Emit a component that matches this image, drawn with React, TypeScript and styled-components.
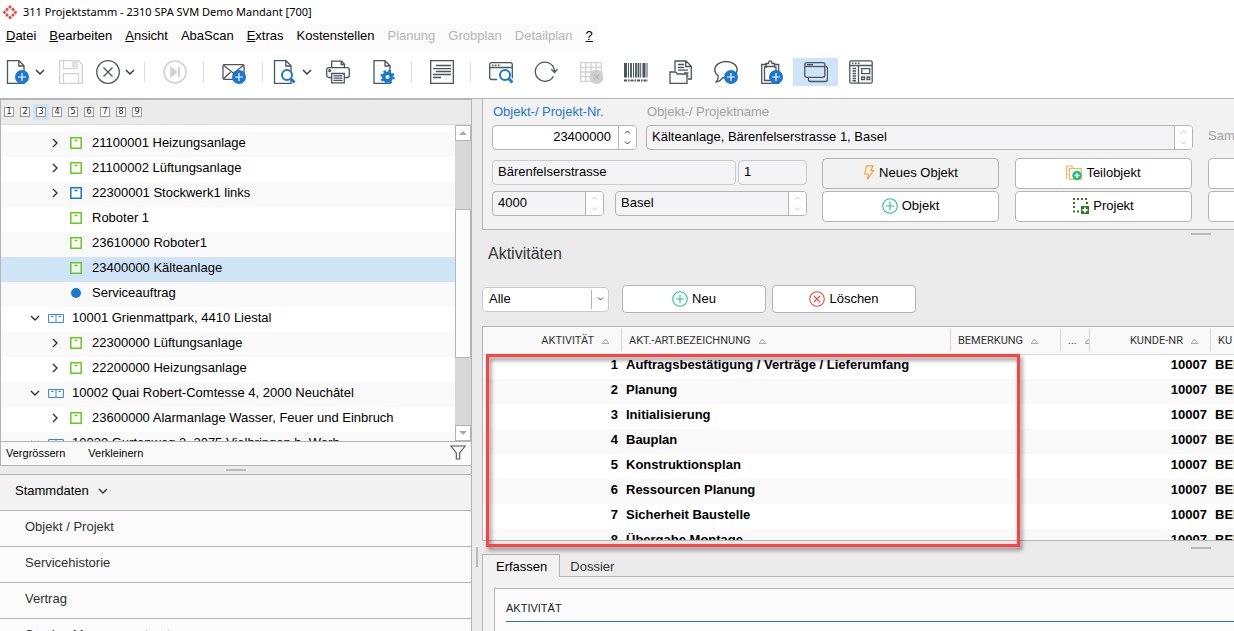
import React from "react";
import styled, { createGlobalStyle, css } from "styled-components";

const SANS = `"Liberation Sans", Arial, sans-serif`;
const INK = "#4a5560";
const BLUE = "#1a78d2";
const MUTED = "#d2d2d2";
const LINE = "#b4b4b4";

const GlobalStyle = createGlobalStyle`
  * { box-sizing: border-box; }
  body { margin: 0; background: #fff; color: #000; font: 13px/16px ${SANS}; }
  button, input, select { font: inherit; color: inherit; }
  button { margin: 0; padding: 0; border: 0; background: none; }
  ul { list-style: none; margin: 0; padding: 0; }
  svg { display: block; flex: none; }
`;

/* ---------- frame ---------- */

const Window = styled.div`
  display: flex;
  flex-direction: column;
  height: 100vh;
  overflow: hidden;
`;

const TitleBar = styled.header`
  display: flex;
  align-items: center;
  gap: 5px;
  height: 24px;
  padding-left: 2px;
  font: 11px/16px "Noto Sans", "Open Sans", sans-serif;
`;

const MenuBar = styled.nav`
  display: flex;
  align-items: center;
  align-self: flex-start;
  gap: 13px;
  height: 25px;
  padding: 0 6px 1px;
  background: #fbfbfb;
`;

const MenuItem = styled.button`
  color: ${(p) => (p.disabled ? "#b5b5b5" : "#000")};
`;

const ToolBar = styled.div`
  display: flex;
  align-items: center;
  height: 49px;
  padding: 0 0 3px 3px;
`;

const ToolButton = styled.button<{ $active?: boolean }>`
  display: flex;
  align-items: center;
  justify-content: center;
  gap: 4px;
  width: 45px;
  height: 28px;
  background: ${(p) => (p.$active ? "#d0e4f8" : "transparent")};
`;

const Separator = styled.span`
  width: 1px;
  height: 20px;
  margin: 0 7px 0 6px;
  background: #dcdcdc;
`;

const Body = styled.div`
  display: flex;
  flex: 1;
  min-height: 0;
  border-top: 1px solid ${LINE};
  background: #ebebeb;
`;

const Sidebar = styled.aside`
  display: flex;
  flex-direction: column;
  flex: none;
  width: 472px;
  border-right: 1px solid ${LINE};
`;

const VerticalSplitter = styled.div`
  flex: none;
  width: 10px;
  padding: 448px 0 0 4px;
`;

const VerticalGrip = styled.div`
  width: 2px;
  height: 20px;
  background: #bababa;
`;

const Splitter = styled.div<{ $height: number; $start?: number }>`
  display: flex;
  flex: none;
  align-items: center;
  justify-content: ${(p) => (p.$start ? "flex-start" : "center")};
  padding-left: ${(p) => p.$start ?? 0}px;
  height: ${(p) => p.$height}px;
`;

const Grip = styled.div`
  flex: none;
  width: 20px;
  height: 2px;
  background: #bababa;
`;

/* ---------- project tree ---------- */

const TreePanel = styled.section`
  display: flex;
  flex: none;
  flex-direction: column;
  height: 367px;
  border: solid ${LINE};
  border-width: 1px 0 1px 1px;
`;

const LevelBar = styled.div`
  display: flex;
  align-items: center;
  flex: none;
  height: 25px;
  border-bottom: 1px solid #dadada;
`;

const Level = styled.button<{ $active?: boolean }>`
  display: flex;
  align-items: center;
  justify-content: center;
  width: 16px;
  height: 16px;
  background: ${(p) => (p.$active ? "#d0e4f8" : "transparent")};
  span {
    width: 10px;
    height: 10px;
    border: 1px solid #9a9a9a;
    background: #fff;
    color: #222;
    font: 8px/8px "DejaVu Sans", sans-serif;
    text-align: center;
  }
`;

const TreeArea = styled.div`
  display: flex;
  flex: 1;
  min-height: 0;
  background: #fff;
`;

const Tree = styled.ul`
  flex: 1;
  overflow: hidden;
  padding-top: 7px;
`;

const TreeRow = styled.li<{ $level: number; $selected?: boolean }>`
  display: flex;
  align-items: center;
  height: 25px;
  padding: 0 0 3px ${(p) => 6 + p.$level * 20}px;
  white-space: nowrap;
  background: #fff;
  &:nth-child(odd) { background: #f9f9f9; }
  ${(p) => p.$selected && css`&& { background: #d0e4f8; }`}
`;

const TreeSlot = styled.span<{ $gap: number }>`
  display: flex;
  justify-content: center;
  width: 16px;
  margin-right: ${(p) => p.$gap}px;
`;

const Scrollbar = styled.div`
  display: flex;
  flex-direction: column;
  flex: none;
  width: 16px;
  background: #d8d8d8;
`;

const ScrollButton = styled.button`
  display: flex;
  align-items: center;
  justify-content: center;
  height: 16px;
  border: 1px solid ${LINE};
  background: #fff;
`;

const ScrollThumb = styled.div`
  height: 149px;
  margin: 68px 0 auto;
  border: 1px solid ${LINE};
  background: #fbfbfb;
`;

const TreeFooter = styled.div`
  display: flex;
  align-items: center;
  flex: none;
  gap: 23px;
  height: 24px;
  padding: 0 5px 1px;
  border-top: 1px solid ${LINE};
  background: #fafafa;
  font-size: 11px;
  svg { margin-left: auto; }
`;

/* ---------- section navigation ---------- */

const SectionNav = styled.nav`
  flex: 1;
  min-height: 0;
  overflow: hidden;
  border-top: 1px solid ${LINE};
  background: #fbfbfb;
`;

const SectionHead = styled.button`
  display: flex;
  align-items: center;
  gap: 8px;
  width: 100%;
  height: 36px;
  padding: 0 15px 3px;
  border-bottom: 1px solid ${LINE};
  background: #f2f2f2;
`;

const SectionLink = styled.a`
  display: flex;
  align-items: center;
  height: 36px;
  padding: 0 25px 3px;
  border-bottom: 1px solid ${LINE};
  color: #303030;
  text-decoration: none;
`;

/* ---------- object form ---------- */

const Main = styled.main`
  display: flex;
  flex: 1;
  flex-direction: column;
  min-width: 0;
  overflow: hidden;
`;

const ObjectForm = styled.form`
  display: flex;
  flex: none;
  flex-direction: column;
  height: 131px;
  padding: 5px 0 0 9px;
  border: solid ${LINE};
  border-width: 0 0 1px 1px;
  background: #f2f2f2;
  overflow: hidden;
`;

const FormLine = styled.div<{ $gap: number }>`
  display: flex;
  gap: ${(p) => p.$gap}px;
`;

const Field = styled.div<{ $width: number }>`
  display: flex;
  flex: none;
  flex-direction: column;
  gap: 5px;
  width: ${(p) => p.$width}px;
`;

const Label = styled.label<{ $linked?: boolean }>`
  padding-left: 1px;
  color: ${(p) => (p.$linked ? BLUE : "#a3a3a3")};
`;

const SideLabel = styled.span`
  padding: 24px 0 0 6px;
  color: #a3a3a3;
`;

const Box = styled.div<{ $width?: number; $editable?: boolean; $soft?: boolean }>`
  display: flex;
  width: ${(p) => (p.$width ? `${p.$width}px` : "100%")};
  height: 25px;
  border: 1px solid ${(p) => (p.$soft ? "#cbcbcb" : LINE)};
  border-radius: 4px;
  background: ${(p) => (p.$editable ? "#fff" : "#f4f4f7")};
  overflow: hidden;
`;

const TextInput = styled.input<{ $right?: boolean }>`
  flex: 1;
  min-width: 0;
  padding: 0 7px 2px 5px;
  border: 0;
  outline: 0;
  background: transparent;
  text-align: ${(p) => (p.$right ? "right" : "left")};
`;

const Stepper = styled.div<{ $dim?: boolean }>`
  display: flex;
  flex-direction: column;
  justify-content: space-between;
  flex: none;
  width: 18px;
  padding: 4px 0;
  border-left: 1px solid ${LINE};
  background: #fff;
  color: ${(p) => (p.$dim ? "#c4c4c4" : "#333")};
  button { display: flex; justify-content: center; color: inherit; }
`;

const AddressFields = styled.div`
  display: flex;
  flex: none;
  flex-direction: column;
  gap: 6px;
  width: 315px;
  padding-top: 10px;
`;

const ButtonGrid = styled.div`
  display: grid;
  flex: none;
  grid-template-columns: repeat(3, 177px);
  grid-auto-rows: 31px;
  gap: 2px 16px;
  padding-top: 8px;
`;

const Command = styled.button<{ $width?: number; $dim?: boolean }>`
  display: flex;
  align-items: center;
  justify-content: center;
  gap: 4px;
  width: ${(p) => (p.$width ? `${p.$width}px` : "100%")};
  min-height: 28px;
  padding-bottom: 1px;
  border: 1px solid ${LINE};
  border-radius: 4px;
  background: ${(p) => (p.$dim ? "#f2f2f2" : "#fff")};
`;

/* ---------- activities ---------- */

const Heading = styled.h2`
  flex: none;
  margin: 0;
  padding: 6px 6px 21px;
  color: #333;
  font-size: 16px;
  font-weight: 400;
  line-height: 20px;
`;

const Actions = styled.div`
  display: flex;
  flex: none;
  align-items: center;
  gap: 6px;
  padding-bottom: 13px;
`;

const Picker = styled.div`
  display: flex;
  align-items: center;
  width: 127px;
  height: 25px;
  margin-right: 7px;
  border: 1px solid #cbcbcb;
  border-radius: 4px;
  background: #fff;
  select {
    flex: 1;
    height: 23px;
    padding: 0 0 1px 6px;
    border: 0;
    background: transparent;
    appearance: none;
    outline: 0;
  }
  span {
    display: flex;
    align-items: center;
    justify-content: center;
    width: 17px;
    height: 19px;
    border-left: 1px solid ${LINE};
    color: #444;
  }
`;

const TablePane = styled.div`
  position: relative;
  flex: none;
  height: 215px;
  border: solid ${LINE};
  border-width: 1px 0 1px 1px;
  background: #fff;
`;

const TableClip = styled.div`
  height: 100%;
  overflow: hidden;
`;

const ActivityTable = styled.table`
  width: 100%;
  min-width: 751px;
  border-collapse: collapse;
  table-layout: fixed;
  td, th { padding: 0; white-space: nowrap; overflow: hidden; }
  td { height: 25px; padding: 0 4px 3px; font-weight: 700; }
  th { height: 27px; background: #f9f9f9; border-bottom: 1px solid #dadada; }
  tbody tr:nth-child(even) { background: #f9f9f9; }
`;

const HeadCell = styled.div<{ $right?: boolean; $last?: boolean }>`
  display: flex;
  align-items: center;
  justify-content: ${(p) => (p.$right ? "flex-end" : "flex-start")};
  gap: 7px;
  height: 22px;
  padding: 1px ${(p) => (p.$right ? 11 : 0)}px 0 7px;
  border-right: ${(p) => (p.$last ? 0 : 1)}px solid #d6d6d6;
  overflow: hidden;
  color: #333;
  font: 400 11px/16px Roboto, ${SANS};
`;

const NumberCell = styled.td`
  text-align: right;
`;

const Highlight = styled.div`
  position: absolute;
  top: 27px;
  left: 3px;
  width: 534px;
  height: 193px;
  border: 3px solid #fb4343;
  filter: drop-shadow(2px 3px 2px rgba(0, 0, 0, 0.5));
  pointer-events: none;
`;

/* ---------- detail tabs ---------- */

const Tabs = styled.div`
  display: flex;
  flex: none;
  height: 23px;
`;

const Tab = styled.button<{ $active?: boolean }>`
  flex: none;
  padding: 2px 12px 0 13px;
  border: solid ${LINE};
  border-width: 1px 1px 0 1px;
  background: #f2f2f2;
  ${(p) =>
    !p.$active &&
    css`
      flex: 1;
      padding: 3px 0 0 10px;
      border-width: 0 0 1px 0;
      background: transparent;
      color: #333;
      text-align: left;
    `}
`;

const TabPage = styled.div`
  flex: 1;
  min-height: 0;
  padding: 11px 0 0 11px;
  border-left: 1px solid ${LINE};
  background: #f2f2f2;
`;

const DetailCard = styled.section`
  height: 100%;
  padding: 11px 0 0 11px;
  border: solid ${LINE};
  border-width: 1px 0 0 1px;
  background: #fbfbfb;
`;

const DetailTitle = styled.h3`
  margin: 0;
  padding-bottom: 5px;
  border-bottom: 1px solid #1f75b5;
  color: #222;
  font: 400 11px/16px ${SANS};
`;

/* ---------- drawings ---------- */

const Svg = ({ s = 24, w, h, c = INK, sw = 1.3, children }: {
  s?: number; w?: number; h?: number; c?: string; sw?: number; children: React.ReactNode;
}) => (
  <svg width={w ?? s} height={h ?? s} viewBox={`0 0 ${w ?? s} ${h ?? s}`} fill="none" stroke={c} strokeWidth={sw} aria-hidden="true">
    {children}
  </svg>
);

const PlusBadge = ({ x, y }: { x: number; y: number }) => (
  <g>
    <circle cx={x} cy={y} r="7" fill={BLUE} stroke="none" />
    <path d={`M${x - 4} ${y}h8M${x} ${y - 4}v8`} stroke="#fff" strokeWidth="1.2" />
  </g>
);

const Magnifier = ({ x, y }: { x: number; y: number }) => (
  <g stroke={BLUE}>
    <circle cx={x} cy={y} r="5" fill="#fff" strokeWidth="2" />
    <path d={`M${x + 3.5} ${y + 3.5}l4 4`} strokeWidth="3" />
  </g>
);

const SHEET = "M1.5 .7h11.5l5 5v17.6h-16.5zM12.8 .7v5.3h5.2";

const Down = () => (
  <Svg w={12} h={12} sw={1.4} c="#333"><path d="M2 4l4 4 4-4" /></Svg>
);

const icons = {
  create: <Svg><path d={SHEET} /><PlusBadge x={16} y={17} /></Svg>,
  save: (
    <Svg c={MUTED}>
      <path d="M.7 .7h19l3.6 3.6v19H.7zM4.5 .7v8h13.5v-8M4.5 23.3v-9.6h15v9.6M14 2.5h2v4h-2z" />
    </Svg>
  ),
  cancel: <Svg><circle cx="12" cy="12" r="11.3" /><path d="M7.5 7.5l9 9M16.5 7.5l-9 9" /></Svg>,
  skip: (
    <Svg c={MUTED} sw={1.6}>
      <circle cx="12" cy="12" r="11" />
      <path d="M8 7.5l5.5 4.5-5.5 4.5z" fill={MUTED} /><path d="M16 7v10" strokeWidth="2" />
    </Svg>
  ),
  mail: <Svg><rect x="1" y="4.7" width="21" height="14.6" rx="1" /><path d="M1.5 5.2l10 8 10-8M1.5 18.8l7-6.5" /><PlusBadge x={17} y={17} /></Svg>,
  find: <Svg><path d={SHEET} /><Magnifier x={14} y={15} /></Svg>,
  print: (
    <Svg>
      <path d="M5.7 7.5V1.2h9.8l3 3v3.3M15.2 1.2v3.3h3.3M5.5 17.5H2.7a2 2 0 0 1-2-2V9.7a2 2 0 0 1 2-2h18.6a2 2 0 0 1 2 2v5.8a2 2 0 0 1-2 2h-2.8" />
      <path d="M5.7 13.5h12.6v9.3H5.7zM7.5 15.8h9M7.5 18.1h9M7.5 20.4h9" /><circle cx="3.7" cy="10.6" r="1" />
    </Svg>
  ),
  settings: (
    <Svg>
      <path d="M3 .7h11l5 5v17.6H3zM14 .7v5.3h5" />
      <circle cx="16.5" cy="17" r="3.8" fill="#fff" stroke={BLUE} strokeWidth="3.6" />
      <circle cx="16.5" cy="17" r="6.2" stroke={BLUE} strokeWidth="2" strokeDasharray="2.5 2.37" />
    </Svg>
  ),
  text: <Svg><path d="M.7 .7h22.6v22.6H.7z" /><path d="M6 5.5h15M3 8.7h18M6 11.5h15M3 14.5h18M3 17.5h8" /></Svg>,
  inspect: (
    <Svg>
      <path d="M8 19.5H2.5a1.8 1.8 0 0 1-1.8-1.8V4.500a1.800 1.800 0 0 1 1.800-1.800h19a1.800 1.800 0 0 1 1.800 1.800v14M.7 7.500h22.600" />
      <path d="M3 5.2h1.5M6 5.2h1.5M9 5.2h1.5" strokeWidth="1.5" /><Magnifier x={16} y={15} />
    </Svg>
  ),
  refresh: <Svg><path d="M19.4 16.2a9.6 9.6 0 1 1 .9-6.500c.2 .8 .3 1.500 .3 2.500M17.300 9.200l3.300 3.300 2.900-3.700" /></Svg>,
  grid: (
    <Svg c={MUTED}>
      <path d="M1.7 2.7h20.6v18.6H1.7zM6.8 2.7v18.6M12 2.7v18.6M17.2 2.7v18.6M1.7 7.4h20.6M1.7 12h20.6M1.7 16.7h20.6" />
      <circle cx="17.5" cy="17" r="6.5" fill="#cfcfcf" /><path d="M15 14.5l5 5M20 14.5l-5 5" stroke="#bbb" />
    </Svg>
  ),
  barcode: (
    <Svg>
      <path d="M1.5 3v14.5M20 3v14.5" strokeWidth="3" /><path d="M4.5 3v14.5M9.5 3v14.5M16.700 3v14.500M23 3v14.500" strokeWidth="1" />
      <path d="M7 3v14.5M12 3v14.5M14.5 3v14.5" strokeWidth="1.8" />
      <path d="M0 20.5h24" strokeWidth="1.8" strokeDasharray="3 1 1.5 1" />
    </Svg>
  ),
  files: (
    <Svg>
      <path d="M6 11V1h11l5.3 5.3V19H19M16.7 1v5.500h5.500M9 4.500h6M9 7.500h6M9 10.200h10M15 13h4.500M15 16h4.500" />
      <path d="M1 23.3V12h5.500l2 2H18v9.300z" fill="#fff" />
    </Svg>
  ),
  comment: (
    <Svg>
      <path d="M12 1.5c6.2 0 11.2 3.6 11.2 8.2S18 18 12 18c-1.2 0-2.3-.1-3.4-.4-1.3 2.3-3.6 3.9-6.3 4.2 1.5-1.6 2.1-3.7 2-5.8C2.2 14.4 .8 12.2 .8 9.7 .8 5.1 5.8 1.5 12 1.5z" />
      <PlusBadge x={17} y={17} />
    </Svg>
  ),
  clipboard: (
    <Svg>
      <path d="M8 4.5H2.7v18.8h17V4.5H15M8 7h-2.5v13.5H17V7h-2M7 6.5V3.5h2.5C9.5 1.5 10 .8 11.2 .8s1.8 .7 1.8 2.7h2.5v3z" />
      <PlusBadge x={17} y={17} />
    </Svg>
  ),
  windows: (
    <Svg>
      <path d="M4.5 17v2.5a2 2 0 0 0 2 2h15a2 2 0 0 0 2-2v-11a2 2 0 0 0-2-2" />
      <rect x=".8" y="2.7" width="20" height="14.6" rx="2" /><path d="M1 6.5h20" /><path d="M3 4.7h6" strokeWidth="1.5" />
    </Svg>
  ),
  layout: (
    <Svg>
      <rect x=".8" y=".8" width="22.4" height="22.4" rx="1.5" /><path d="M1 5.5h22M9.5 5.5V23M12.7 8.7h8v5h-8zM12.7 17h2.8v2.5h-2.8zM18 17h2.800v2.500H18z" />
      <path d="M3 3.2h1.5M6 3.2h1.5M9 3.2h1.5M3.5 8.5h3.5M3.5 11h3.5M3.5 13.5h3.5M3.5 16h3.5M3.5 18.5h3.5M3.5 20.8h3.5" strokeWidth="1.5" />
    </Svg>
  ),
};

const logoDots = [[8, 3], [5, 5.5], [11, 5.5], [2.5, 8.3], [13.5, 8.3], [5, 11], [11, 11], [8, 13.5]];

const Logo = () => (
  <svg width="16" height="16" viewBox="0 0 16 16" fill="#f0443c" aria-hidden="true">
    {logoDots.map(([x, y]) => (
      <path key={`${x}-${y}`} d={`M${x} ${y - 1.9}l1.9 1.9-1.9 1.9-1.9-1.9z`} />
    ))}
  </svg>
);

const BoxIcon = ({ color }: { color: string }) => (
  <Svg s={12} c={color} sw={1.5}><path d="M.8 .8h10.4v10.4H.8z" fill="#fff" fillOpacity=".6" /><path d="M4.5 3.5h3" /></Svg>
);

const CabinetIcon = () => (
  <Svg w={16} h={9} c="#3a8bd8" sw={1}><path d="M.5 .5h15v8H.5zM8 .5v8M3 2.5h2.5M10.5 2.5H13" /></Svg>
);

const CirclePlus = () => (
  <Svg s={16} c="#2bc48a" sw={1.1}><circle cx="8" cy="8" r="7.3" /><path d="M8 3.8v8.4M3.8 8h8.4" /></Svg>
);

const CircleCross = () => (
  <Svg s={16} c="#f0443c" sw={1.1}><circle cx="8" cy="8" r="7.3" /><path d="M5 5l6 6M11 5l-6 6" /></Svg>
);

const Bolt = () => (
  <Svg w={12} h={16} c="#f9a13c" sw={1.2}><path d="M3.5 .8h6.5L8 5.5h2.7L4.3 14.5 5.5 9H1.8z" /></Svg>
);

const FolderPlus = () => (
  <Svg s={16} c="#f9b257" sw={1.2}>
    <path d="M.7 14V1h5l1 2M3.5 14.3V3.5h11.8v10.8z" />
    <circle cx="11" cy="10.5" r="4.7" fill="#17c07a" stroke="none" /><path d="M8.5 10.5h5M11 8v5" stroke="#fff" strokeWidth="1.4" />
  </Svg>
);

const AreaPlus = () => (
  <Svg s={16} c="#2f7d1f">
    <path d="M0 1h15M0 13.5h7" strokeWidth="2" strokeDasharray="2 2" /><path d="M1 4v8M14 4v3" strokeWidth="2" strokeDasharray="2 2" />
    <path d="M8 8h8v8H8z" fill="#2f7d1f" stroke="none" /><path d="M9.5 12h5M12 9.5v5" stroke="#fff" strokeWidth="2" />
  </Svg>
);

const SortMark = () => (
  <Svg w={9} h={6} c="#a9a9a9" sw={1}><path d="M1 5.5h7L4.5 1z" /></Svg>
);

const Funnel = () => (
  <Svg s={16} c={INK} sw={1.1}><path d="M.8 1h14.4L9.7 8v6H6.3V8z" /></Svg>
);

const Arrow = ({ up }: { up?: boolean }) => (
  <Svg w={8} h={4}><path d={up ? "M0 4l4-4 4 4z" : "M0 0l4 4 4-4z"} fill="#a9a9a9" stroke="none" /></Svg>
);

const Caret = ({ up }: { up?: boolean }) => (
  <Svg w={7} h={4} c="currentColor" sw={1}><path d={up ? "M1 3.5l2.5-2.5 2.5 2.5" : "M1 .5l2.5 2.5 2.5-2.5"} /></Svg>
);

const Steps = ({ dim }: { dim?: boolean }) => (
  <Stepper $dim={dim}>
    <button type="button" aria-label="Vorheriger"><Caret up /></button>
    <button type="button" aria-label="Nächster"><Caret /></button>
  </Stepper>
);

/* ---------- data ---------- */

const menu: { text: string; key?: boolean; off?: boolean }[] = [
  { text: "Datei", key: true }, { text: "Bearbeiten", key: true }, { text: "Ansicht", key: true }, { text: "AbaScan" },
  { text: "Extras", key: true }, { text: "Kostenstellen" }, { text: "Planung", off: true },
  { text: "Grobplan", off: true }, { text: "Detailplan", off: true }, { text: "?", key: true },
];

type Tool = { icon: keyof typeof icons; name: string; more?: boolean; active?: boolean };
const tools: Tool[][] = [
  [{ icon: "create", name: "Neu", more: true }, { icon: "save", name: "Speichern" }, { icon: "cancel", name: "Abbrechen", more: true }],
  [{ icon: "skip", name: "Weiter" }],
  [{ icon: "mail", name: "E-Mail" }],
  [{ icon: "find", name: "Vorschau", more: true }, { icon: "print", name: "Drucken" }, { icon: "settings", name: "Einstellungen" }],
  [{ icon: "text", name: "Text" }],
  [
    { icon: "inspect", name: "Suchen" }, { icon: "refresh", name: "Aktualisieren" }, { icon: "grid", name: "Tabelle" },
    { icon: "barcode", name: "Barcode" }, { icon: "files", name: "Dossier" }, { icon: "comment", name: "Kommentar" },
    { icon: "clipboard", name: "Pendenz" }, { icon: "windows", name: "Fenster", active: true }, { icon: "layout", name: "Layout" },
  ],
];

type TreeNode = { text: string; level: 1 | 2; kind: "green" | "blue" | "dot" | "cabinet"; open?: boolean; leaf?: boolean; selected?: boolean };
const nodes: TreeNode[] = [
  { text: "21100001 Heizungsanlage", level: 2, kind: "green" },
  { text: "21100002 Lüftungsanlage", level: 2, kind: "green" },
  { text: "22300001 Stockwerk1 links", level: 2, kind: "blue" },
  { text: "Roboter 1", level: 2, kind: "green", leaf: true },
  { text: "23610000 Roboter1", level: 2, kind: "green", leaf: true },
  { text: "23400000 Kälteanlage", level: 2, kind: "green", leaf: true, selected: true },
  { text: "Serviceauftrag", level: 2, kind: "dot", leaf: true },
  { text: "10001 Grienmattpark, 4410 Liestal", level: 1, kind: "cabinet", open: true },
  { text: "22300000 Lüftungsanlage", level: 2, kind: "green" },
  { text: "22200000 Heizungsanlage", level: 2, kind: "green" },
  { text: "10002 Quai Robert-Comtesse 4, 2000 Neuchâtel", level: 1, kind: "cabinet", open: true },
  { text: "23600000 Alarmanlage Wasser, Feuer und Einbruch", level: 2, kind: "green" },
  { text: "10030 Gurtenweg 3, 3075 Vielbringen b. Worb", level: 1, kind: "cabinet", open: true },
];

const nodeIcon = {
  green: <BoxIcon color="#69c91e" />,
  blue: <BoxIcon color={BLUE} />,
  dot: <Svg s={10}><circle cx="5" cy="5" r="5" fill={BLUE} stroke="none" /></Svg>,
  cabinet: <CabinetIcon />,
};

const activities = [
  "Auftragsbestätigung / Verträge / Lieferumfang", "Planung", "Initialisierung", "Bauplan",
  "Konstruktionsplan", "Ressourcen Planung", "Sicherheit Baustelle", "Übergabe Montage",
];

const sections = ["Objekt / Projekt", "Servicehistorie", "Vertrag", "Service-Managementvertrag"];

export default function App() {
  return (
    <Window>
      <GlobalStyle />
      <TitleBar><Logo />311 Projektstamm - 2310 SPA SVM Demo Mandant [700]</TitleBar>
      <MenuBar>
        {menu.map((m) => (
          <MenuItem key={m.text} disabled={m.off}>
            {m.key ? <><u>{m.text[0]}</u>{m.text.slice(1)}</> : m.text}
          </MenuItem>
        ))}
      </MenuBar>
      <ToolBar>
        {tools.map((group, i) => (
          <React.Fragment key={i}>
            {i > 0 && <Separator />}
            {group.map((t) => (
              <ToolButton key={t.name} aria-label={t.name} $active={t.active}>
                {icons[t.icon]}
                {t.more && <Down />}
              </ToolButton>
            ))}
          </React.Fragment>
        ))}
      </ToolBar>
      <Body>
        <Sidebar>
          <TreePanel>
            <LevelBar>
              {[1, 2, 3, 4, 5, 6, 7, 8, 9].map((n) => (
                <Level key={n} $active={n === 3}><span>{n}</span></Level>
              ))}
            </LevelBar>
            <TreeArea>
              <Tree>
                {nodes.map((n) => (
                  <TreeRow key={n.text} $level={n.level} $selected={n.selected}>
                    <TreeSlot $gap={5}>
                      {!n.leaf && (
                        <Svg s={12} c="#333" sw={1.4}><path d={n.open ? "M2 4l4 4 4-4" : "M4 2l4 4-4 4"} /></Svg>
                      )}
                    </TreeSlot>
                    <TreeSlot $gap={8}>{nodeIcon[n.kind]}</TreeSlot>
                    <span>{n.text}</span>
                  </TreeRow>
                ))}
              </Tree>
              <Scrollbar>
                <ScrollButton aria-label="Nach oben"><Arrow up /></ScrollButton>
                <ScrollThumb />
                <ScrollButton aria-label="Nach unten"><Arrow /></ScrollButton>
              </Scrollbar>
            </TreeArea>
            <TreeFooter>
              <button>Vergrössern</button>
              <button>Verkleinern</button>
              <Funnel />
            </TreeFooter>
          </TreePanel>
          <Splitter $height={8}><Grip /></Splitter>
          <SectionNav>
            <SectionHead>Stammdaten<Down /></SectionHead>
            {sections.map((s) => <SectionLink key={s} href="#">{s}</SectionLink>)}
          </SectionNav>
        </Sidebar>

        <VerticalSplitter><VerticalGrip /></VerticalSplitter>

        <Main>
          <ObjectForm onSubmit={(e) => e.preventDefault()}>
            <FormLine $gap={9}>
              <Field $width={145}>
                <Label htmlFor="nr" $linked>Objekt-/ Projekt-Nr.</Label>
                <Box $editable><TextInput id="nr" $right defaultValue="23400000" /><Steps /></Box>
              </Field>
              <Field $width={547}>
                <Label htmlFor="name">Objekt-/ Projektname</Label>
                <Box><TextInput id="name" defaultValue="Kälteanlage, Bärenfelserstrasse 1, Basel" /><Steps dim /></Box>
              </Field>
              <SideLabel>Sam</SideLabel>
            </FormLine>
            <FormLine $gap={15}>
              <AddressFields>
                <FormLine $gap={2}>
                  <Box $width={244} $soft><TextInput aria-label="Strasse" defaultValue="Bärenfelserstrasse" /></Box>
                  <Box $width={69} $soft><TextInput aria-label="Hausnummer" defaultValue="1" /></Box>
                </FormLine>
                <FormLine $gap={11}>
                  <Box $width={112}><TextInput aria-label="PLZ" defaultValue="4000" /><Steps dim /></Box>
                  <Box $width={192}><TextInput aria-label="Ort" defaultValue="Basel" /><Steps dim /></Box>
                </FormLine>
              </AddressFields>
              <ButtonGrid>
                <Command type="button" $dim><Bolt />Neues Objekt</Command>
                <Command type="button"><FolderPlus />Teilobjekt</Command>
                <Command type="button" aria-label="Weitere Aktion" />
                <Command type="button"><CirclePlus />Objekt</Command>
                <Command type="button"><AreaPlus />Projekt</Command>
                <Command type="button" aria-label="Weitere Aktion" />
              </ButtonGrid>
            </FormLine>
          </ObjectForm>
          <Splitter $height={8} $start={709}><Grip /></Splitter>
          <Heading>Aktivitäten</Heading>
          <Actions>
            <Picker>
              <select aria-label="Filter"><option>Alle</option></select>
              <span><Caret /></span>
            </Picker>
            <Command $width={144}><CirclePlus />Neu</Command>
            <Command $width={144}><CircleCross />Löschen</Command>
          </Actions>
          <TablePane>
            <TableClip>
              <ActivityTable>
                <colgroup>
                  <col width="139" /><col width="329" /><col width="110" /><col width="29" /><col width="121" /><col />
                </colgroup>
                <thead>
                  <tr>
                    <th><HeadCell $right>AKTIVITÄT<SortMark /></HeadCell></th>
                    <th><HeadCell>AKT.-ART.BEZEICHNUNG<SortMark /></HeadCell></th>
                    <th><HeadCell>BEMERKUNG<SortMark /></HeadCell></th>
                    <th><HeadCell>...<SortMark /></HeadCell></th>
                    <th><HeadCell $right>KUNDE-NR<SortMark /></HeadCell></th>
                    <th><HeadCell $last>KU</HeadCell></th>
                  </tr>
                </thead>
                <tbody>
                  {activities.map((a, i) => (
                    <tr key={a}>
                      <NumberCell>{i + 1}</NumberCell>
                      <td>{a}</td>
                      <td />
                      <td />
                      <NumberCell>10007</NumberCell>
                      <td>BEI</td>
                    </tr>
                  ))}
                </tbody>
              </ActivityTable>
            </TableClip>
            <Highlight />
          </TablePane>
          <Splitter $height={13} $start={709}><Grip /></Splitter>
          <Tabs>
            <Tab $active>Erfassen</Tab>
            <Tab>Dossier</Tab>
          </Tabs>
          <TabPage>
            <DetailCard><DetailTitle>AKTIVITÄT</DetailTitle></DetailCard>
          </TabPage>
        </Main>
      </Body>
    </Window>
  );
}
